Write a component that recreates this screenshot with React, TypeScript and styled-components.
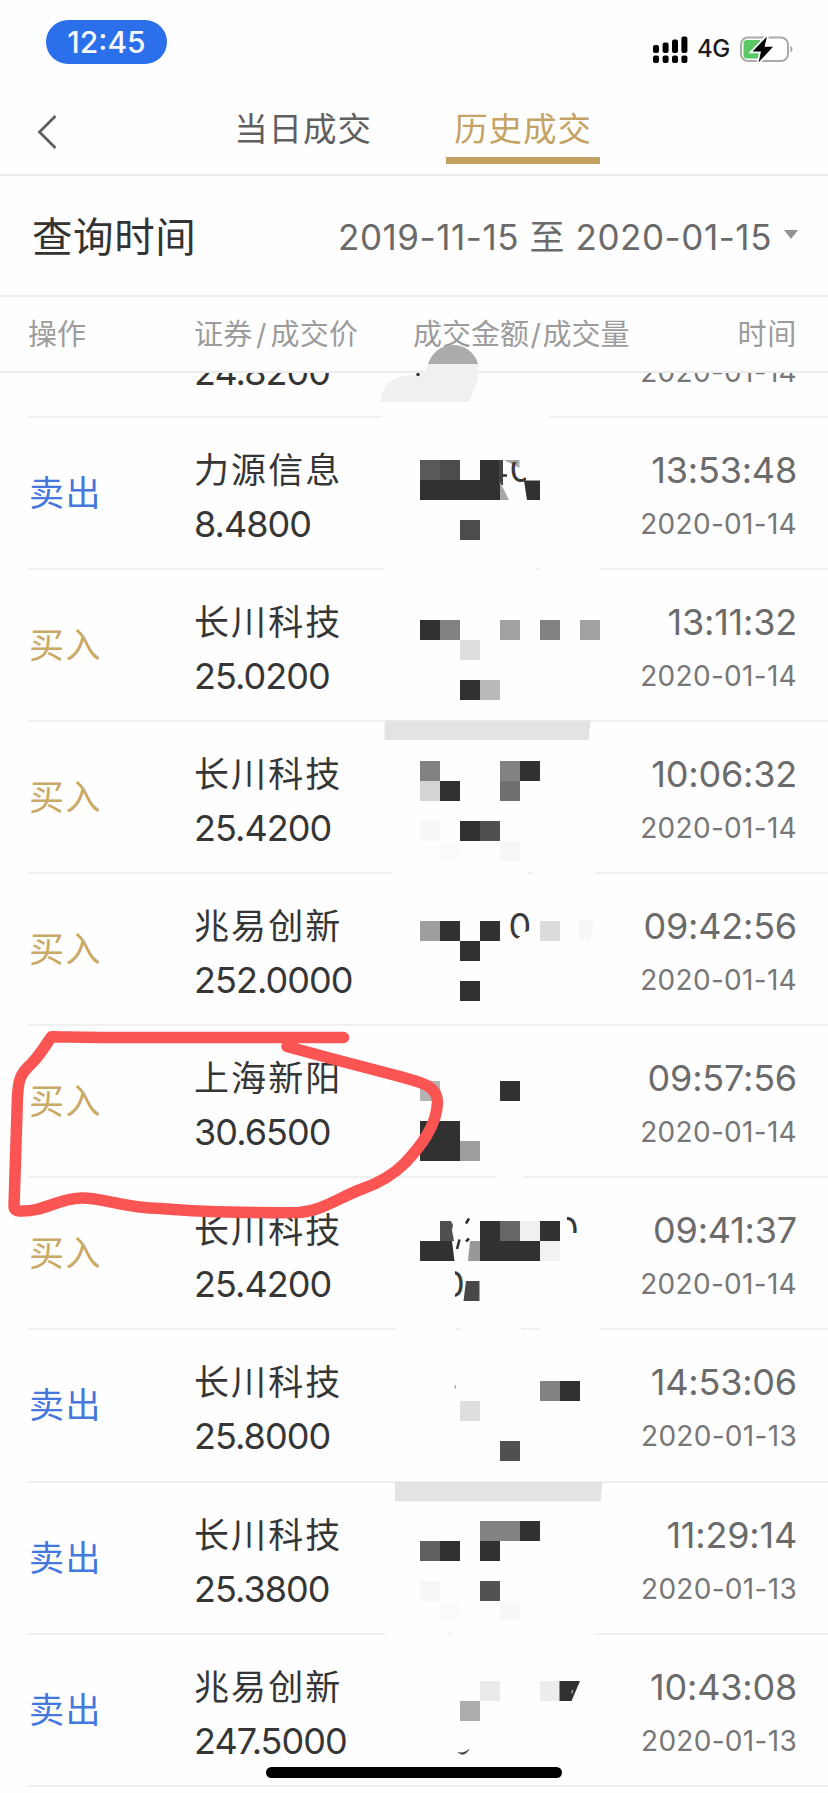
import React from 'react';
import styled, { createGlobalStyle } from 'styled-components';

const GlobalStyle = createGlobalStyle`
  *, *::before, *::after { box-sizing: border-box; }
  body {
    margin: 0;
    background: #fefefe;
    font-family: Inter, "Noto Sans CJK SC", sans-serif;
  }
`;

const Screen = styled.div`
  position: relative;
  display: flex;
  flex-direction: column;
  width: 828px;
  height: 1793px;
  overflow: hidden;
  background: #fefefe;
  white-space: nowrap;
`;

const StatusBar = styled.header`
  display: flex;
  justify-content: space-between;
  align-items: flex-start;
  height: 88px;
  padding: 20px 33px 0 46px;
`;

const TimePill = styled.div`
  width: 121px;
  height: 44px;
  border-radius: 22px;
  background: #2b70ea;
  color: #f4f8ff;
  font-size: 30px;
  font-weight: 500;
  line-height: 45px;
  text-align: center;
`;

const StatusIcons = styled.div`
  display: flex;
  align-items: center;
  height: 28px;
  margin-top: 15px;
`;

const Network = styled.span`
  width: 51px;
  padding-left: 9px;
  color: #1c1c1c;
  font-size: 24px;
  font-weight: 500;
  letter-spacing: -0.4px;
  line-height: 30px;
`;

const NavBar = styled.nav`
  display: flex;
  height: 88px;
  padding-left: 36px;
  border-bottom: 2px solid #e9e9e9;
`;

const BackButton = styled.button`
  display: flex;
  align-items: flex-start;
  width: 190px;
  padding: 26px 0 0;
  border: 0;
  background: none;
`;

const Tab = styled.button<{ $active?: boolean }>`
  display: flex;
  justify-content: center;
  width: 154px;
  height: 76px;
  margin-right: 66px;
  padding: 14px 0 0;
  border: 0;
  border-bottom: 7px solid ${(p) => (p.$active ? '#c4a062' : 'transparent')};
  background: none;
  color: ${(p) => (p.$active ? '#c5a364' : '#606060')};
  font-family: inherit;
  font-size: 33.5px;
  letter-spacing: 0.9px;
  line-height: 55px;
`;

const QueryBar = styled.section`
  display: flex;
  align-items: center;
  justify-content: space-between;
  height: 121px;
  padding: 0 30px 3px 32px;
  border-bottom: 2px solid #ebebeb;
`;

const QueryLabel = styled.h1`
  margin: 0;
  color: #333;
  font-size: 40.5px;
  font-weight: 400;
  letter-spacing: 0.6px;
`;

const DateRange = styled.div`
  display: flex;
  align-items: center;
  color: #6a6a6a;
  font-size: 35px;
  letter-spacing: 0.56px;
`;

const Caret = styled.i`
  margin-left: 12px;
  border: 7px solid transparent;
  border-top: 9px solid #929292;
  border-bottom: 0;
`;

const ColumnHeads = styled.div`
  display: grid;
  grid-template-columns: 166px 219px 1fr auto;
  height: 76px;
  padding: 0 31px 0 28px;
  border-bottom: 2px solid #ebebeb;
  color: #9c9c9c;
  font-size: 29px;
  line-height: 76px;
`;

const Head = styled.span<{ $spacing?: number }>`
  letter-spacing: ${(p) => p.$spacing ?? 0}px;
`;

const Slash = styled.span<{ $gap: number }>`
  margin: 0 ${(p) => p.$gap}px;
`;

const List = styled.main`
  flex: 1;
  overflow: hidden;
`;

const Row = styled.div<{ $clipped?: boolean }>`
  display: grid;
  grid-template-columns: 167px 1fr auto;
  height: 152.15px;
  margin: ${(p) => (p.$clipped ? '-107.5px' : '0')} 0 0 28px;
  padding: 25px 31px 0 0;
  border-bottom: 2px solid #f0f0f0;
`;

const Side = styled.span<{ $sell: boolean }>`
  padding-left: 1px;
  color: ${(p) => (p.$sell ? '#4478dc' : '#c8a965')};
  font-size: 35px;
  letter-spacing: 1.4px;
  line-height: 101px;
`;

const Cell = styled.div<{ $right?: boolean }>`
  display: flex;
  flex-direction: column;
  align-items: ${(p) => (p.$right ? 'flex-end' : 'flex-start')};
`;

const Name = styled.span`
  height: 54px;
  margin-left: -1px;
  color: #363636;
  font-size: 35px;
  letter-spacing: 2.1px;
  line-height: 54px;
`;

const Price = styled.span`
  margin-left: -1px;
  color: #363636;
  font-size: 36px;
  letter-spacing: -0.95px;
  line-height: 54px;
`;

const Time = styled.span`
  color: #6b6b6b;
  font-size: 36px;
  letter-spacing: -0.2px;
  line-height: 54px;
`;

const DateText = styled.span`
  color: #777;
  font-size: 28px;
  letter-spacing: 0.3px;
  line-height: 54px;
`;

const Markup = styled.svg`
  position: absolute;
  inset: 0;
  pointer-events: none;
`;

const HomeIndicator = styled.div`
  position: absolute;
  left: 266px;
  bottom: 15px;
  width: 296px;
  height: 11px;
  border-radius: 6px;
  background: #000;
`;

type Trade = { sell: boolean; name: string; price: string; time: string; date: string };

const trades: Trade[] = [
  { sell: true, name: '力源信息', price: '8.4800', time: '13:53:48', date: '2020-01-14' },
  { sell: false, name: '长川科技', price: '25.0200', time: '13:11:32', date: '2020-01-14' },
  { sell: false, name: '长川科技', price: '25.4200', time: '10:06:32', date: '2020-01-14' },
  { sell: false, name: '兆易创新', price: '252.0000', time: '09:42:56', date: '2020-01-14' },
  { sell: false, name: '上海新阳', price: '30.6500', time: '09:57:56', date: '2020-01-14' },
  { sell: false, name: '长川科技', price: '25.4200', time: '09:41:37', date: '2020-01-14' },
  { sell: true, name: '长川科技', price: '25.8000', time: '14:53:06', date: '2020-01-13' },
  { sell: true, name: '长川科技', price: '25.3800', time: '11:29:14', date: '2020-01-13' },
  { sell: true, name: '兆易创新', price: '247.5000', time: '10:43:08', date: '2020-01-13' },
];

// Mosaic blocks over the amounts: column, top edge, colour.
const dark = '#313131';
const blocks: [number, number, string][] = [
  [0, 460, '#595959'], [1, 460, '#4c4c4c'], [3, 460, dark],
  [0, 480, dark], [1, 480, dark], [2, 480, dark], [3, 480, dark], [2, 520, '#4c4c4c'],
  [0, 620.3, dark], [1, 620.3, '#828282'], [4, 620.3, '#a2a2a2'], [6, 620.3, '#828282'], [8, 620.3, '#a2a2a2'],
  [2, 640.3, '#dedede'], [2, 680.3, dark], [3, 680.3, '#bababa'],
  [0, 760.5, '#828282'], [4, 760.5, '#828282'], [5, 760.5, dark],
  [0, 780.5, '#d4d4d4'], [1, 780.5, dark], [4, 780.5, '#707070'],
  [0, 820.5, '#f8f8f8'], [2, 820.5, dark], [3, 820.5, '#505050'], [1, 840.5, '#fbfbfb'], [4, 840.5, '#f7f7f7'],
  [0, 920.6, '#9e9e9e'], [1, 920.6, dark], [3, 920.6, dark], [6, 920.6, '#dcdcdc'],
  [2, 940.6, dark], [2, 980.5, dark],
  [0, 1080.6, '#b3b3b3'], [4, 1080.6, dark],
  [0, 1120.6, dark], [1, 1120.6, dark], [0, 1140.6, dark], [1, 1140.6, dark], [2, 1140.6, '#9e9e9e'],
  [3, 1220.7, dark], [4, 1220.7, '#666'], [5, 1220.7, '#f0f0f0'], [6, 1220.7, dark],
  [3, 1240.7, dark], [4, 1240.7, dark], [5, 1240.7, dark], [6, 1240.7, '#f2f2f2'],
  [6, 1380.7, '#828282'], [7, 1380.7, dark], [2, 1400.7, '#dedede'], [4, 1440.8, '#505050'],
  [3, 1521, '#828282'], [4, 1521, '#828282'], [5, 1521, dark],
  [0, 1541, '#606060'], [1, 1541, dark], [3, 1541, dark],
  [0, 1581, '#f7f7f7'], [3, 1581, '#525252'], [1, 1601, '#fbfbfb'], [4, 1601, '#f8f8f8'],
  [3, 1681.2, '#eaeaea'], [6, 1681.2, '#ededed'], [2, 1701.2, '#adadad'],
];

// Stretches of divider wiped out by the eraser: left, width, centre y.
const gaps: [number, number, number][] = [
  [382, 168, 416], [384, 152, 569], [539, 61, 569], [392, 136, 873], [533, 62, 873],
  [497, 26, 1177], [395, 60, 1330], [461, 60, 1330], [540, 60, 1330],
  [386, 62, 1634], [451, 143, 1634],
];

function BackIcon() {
  return (
    <svg width="24" height="36" viewBox="0 0 24 36" fill="none" stroke="#5e5e5e" strokeWidth="2.8">
      <path d="M19.5 2 3.5 18l16 16" />
    </svg>
  );
}

function SignalIcon() {
  return (
    <svg width="35" height="28" viewBox="0 0 35 28" fill="#000">
      <rect x="0" y="10" width="6" height="8" rx="2" />
      <rect x="9.6" y="7.5" width="6" height="10.5" rx="2" />
      <rect x="19" y="4.5" width="6" height="13.5" rx="2" />
      <rect x="28.4" y="1.5" width="6" height="16.5" rx="2" />
      <rect x="0" y="20.5" width="6" height="7.5" rx="2" />
      <rect x="9.6" y="20.5" width="6" height="7.5" rx="2" />
      <rect x="19" y="20.5" width="6" height="7.5" rx="2" />
      <rect x="28.4" y="20.5" width="6" height="7.5" rx="2" />
    </svg>
  );
}

function BatteryIcon() {
  return (
    <svg width="56" height="28" viewBox="0 0 56 28">
      <rect x="2" y="2.5" width="47" height="23.5" rx="7" fill="#fff" stroke="#ababab" strokeWidth="2" />
      <path d="M51.5 10.5q4 3.7 0 7.5z" fill="#a0a0a0" />
      <path d="M8 5h13v18.500H8q-3.500 0-3.500-3.500V8.500Q4.500 5 8 5z" fill="#5ac863" />
      <path d="M28 1.500 13.500 16.500h8.500l-2.500 11L34 11.800h-8.500z" fill="#000" stroke="#fff" strokeWidth="3.500" paintOrder="stroke" />
    </svg>
  );
}

function Annotations() {
  return (
    <Markup width="828" height="1793" viewBox="0 0 828 1793">
      <defs>
        <clipPath id="bowl"><path d="M508 462h10v12l8 4v6h-18z" /></clipPath>
        <clipPath id="openZero"><path d="M508 905h24v25l-7 2-9 8h-8z" /></clipPath>
        <clipPath id="rightEdge"><path d="M455 1265h14v36h-14z" /></clipPath>
        <clipPath id="topEdge"><path d="M567 1210h14v23h-14z" /></clipPath>
      </defs>
      {gaps.map(([x, w, y]) => (
        <rect key={`${x}-${y}`} x={x} y={y - 3} width={w} height="6" fill="#fefefe" />
      ))}
      <path d="M428 364C432 352 442 345 453 345S475 352 478 364z" fill="#ababab" />
      <path d="M428 364H478.500V378L469 402H381V398C383 383 395 376 412 375Q426 375 428 364z" fill="#f0f0f0" />
      <circle cx="418" cy="374.500" r="1.700" fill="#333" />
      <path d="M384.600 720.500H590.500L588.600 740H384.600z" fill="#e3e3e3" />
      <path d="M395 1481.500H602.500L600.500 1501.300H395z" fill="#e3e3e3" />
      <g shapeRendering="crispEdges">
        {blocks.map(([col, y, fill]) => (
          <rect key={`${col}-${y}`} x={419.6 + col * 20} y={y} width="20" height="20" fill={fill} />
        ))}
      </g>
      <path d="M499 460h4v25h-4z" fill="#444" />
      <path d="M500 482 509 500h-9zM504 460h15.500v8z" fill="#a6a6a6" />
      <path d="M502 475.500h5" stroke="#333" strokeWidth="2.500" />
      <path d="M524 480.500h16V500h-13z" fill={dark} />
      <path d="M579 920.600h16l-5 20h-11z" fill="#f7f7f7" />
      <path d="M440 1221h11l2 4-1 5 2 11h-14z" fill="#505050" />
      <path d="M420 1241H452l2.500 20H420z" fill={dark} />
      <path d="M470 1241h10v20h-12z" fill="#989898" />
      <path d="M466 1281h13.500v20h-16z" fill="#484848" />
      <path d="M459.500 1239.500 457 1249M469 1218.500l-3 5M466 1241.500l3-3" stroke="#333" strokeWidth="2.600" />
      <path d="M455.300 1385v4" stroke="#999" />
      <path d="M559.500 1681h20.500l-8.500 20h-12z" fill={dark} />
      <path d="M571.500 1694v-3.500l2-1-1 4z" fill="#aaa" />
      <path d="M458 1752.500q7 1 11-3.500-2 5-7 5.500z" fill="#444" stroke="#444" strokeWidth="0.5" />
      <g fill="#3a3a3a" fontSize="36" fontFamily="Inter">
        <text x="509.500" y="481.500" clipPath="url(#bowl)">0</text>
        <text x="508.500" y="938.500" clipPath="url(#openZero)">0</text>
        <text x="442" y="1297" clipPath="url(#rightEdge)">0</text>
        <text x="556" y="1243" clipPath="url(#topEdge)">0</text>
      </g>
      <path
        d="M343.500 1037.500H100L51.500 1036.800C46 1044 41 1054 31 1064C20 1074 18.500 1080 17.500 1096L14 1206Q14 1211 20 1211C45 1212 58 1198 82 1198C105 1198 122 1208 160 1208.500C200 1212 250 1213 299 1212.500C322 1211 338 1198 362 1189C382 1182 394 1174 405 1163C420 1147 437 1126 437.500 1102C437 1084 418 1082 398 1076L333 1059 287 1046.500"
        fill="none"
        stroke="#fa5553"
        strokeWidth="11.5"
        strokeLinecap="round"
        strokeLinejoin="round"
      />
    </Markup>
  );
}

export default function App() {
  return (
    <Screen>
      <GlobalStyle />
      <StatusBar>
        <TimePill>12:45</TimePill>
        <StatusIcons>
          <SignalIcon />
          <Network>4G</Network>
          <BatteryIcon />
        </StatusIcons>
      </StatusBar>
      <NavBar>
        <BackButton aria-label="返回"><BackIcon /></BackButton>
        <Tab>当日成交</Tab>
        <Tab $active>历史成交</Tab>
      </NavBar>
      <QueryBar>
        <QueryLabel>查询时间</QueryLabel>
        <DateRange>
          2019-11-15 至 2020-01-15
          <Caret />
        </DateRange>
      </QueryBar>
      <ColumnHeads>
        <Head>操作</Head>
        <Head $spacing={0.3}>证券<Slash $gap={3.5}>/</Slash>成交价</Head>
        <Head>成交金额<Slash $gap={1.5}>/</Slash>成交量</Head>
        <Head $spacing={0.8}>时间</Head>
      </ColumnHeads>
      <List>
        <Row $clipped>
          <span />
          <Cell><Name /><Price>24.8200</Price></Cell>
          <Cell $right><Name /><DateText>2020-01-14</DateText></Cell>
        </Row>
        {trades.map((t) => (
          <Row key={t.date + t.time}>
            <Side $sell={t.sell}>{t.sell ? '卖出' : '买入'}</Side>
            <Cell><Name>{t.name}</Name><Price>{t.price}</Price></Cell>
            <Cell $right><Time>{t.time}</Time><DateText>{t.date}</DateText></Cell>
          </Row>
        ))}
      </List>
      <Annotations />
      <HomeIndicator />
    </Screen>
  );
}
